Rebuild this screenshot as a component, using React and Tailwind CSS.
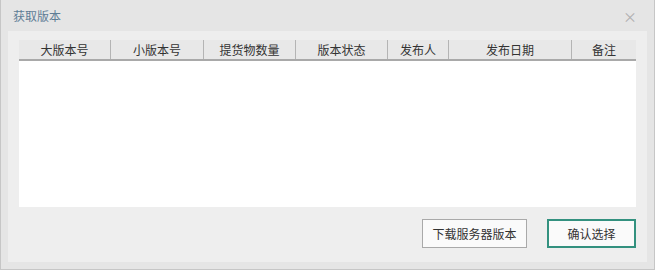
import React from 'react';

const columns = [
  { label: '大版本号', w: 'w-[92px]' },
  { label: '小版本号', w: 'w-[93px]' },
  { label: '提货物数量', w: 'w-[92px]' },
  { label: '版本状态', w: 'w-[92px]' },
  { label: '发布人', w: 'w-[61px]' },
  { label: '发布日期', w: 'w-[123px]' },
  { label: '备注', w: 'flex-1' },
];

export default function App() {
  return (
    <div className="w-[655px] h-[270px] flex flex-col bg-[#e5e5e5] border border-t-0 border-[#c6c6c6] font-['Microsoft_YaHei','Noto_Sans_CJK_SC',sans-serif] text-[12px] text-[#333]">
      <div className="h-[31px] shrink-0 flex items-center justify-between pl-[12px] pr-[17px]">
        <span className="text-[#5f7d96]">获取版本</span>
        <span className="text-[#b0b0b0] text-[14px] leading-none">×</span>
      </div>

      <div className="flex-1 mx-[7px] mb-[7px] bg-[#eeeeee] flex flex-col px-[11px] pt-[9px]">
        <div className="h-[167px] bg-white flex flex-col">
          <div className="h-[21px] flex bg-[#e8e8e8] border-b-2 border-[#a9a9a9]">
            {columns.map((c, i) => (
              <div
                key={c.label}
                className={`${c.w} flex items-center justify-center leading-none pt-[1px] ${i < columns.length - 1 ? 'border-r border-[#b4b4b4]' : ''}`}
              >
                {c.label}
              </div>
            ))}
          </div>
        </div>

        <div className="flex justify-end gap-[20px] mt-[12px]">
          <button className="w-[105px] h-[29px] bg-[#fafafa] border border-[#a9a9a9] text-[#333]">
            下载服务器版本
          </button>
          <button className="w-[89px] h-[29px] bg-[#fafafa] border-2 border-[#33917f] text-[#333]">
            确认选择
          </button>
        </div>
      </div>
    </div>
  );
}
